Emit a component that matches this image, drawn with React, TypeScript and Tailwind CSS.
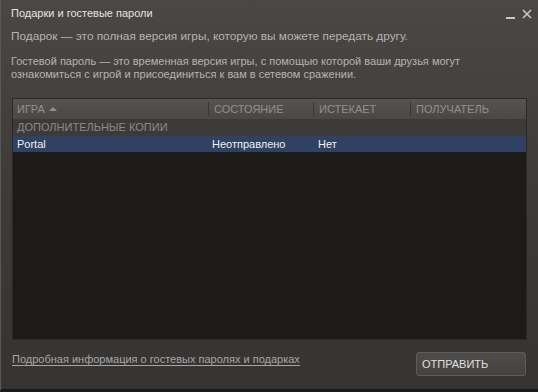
import React from "react";

export default function App() {
  const font = { fontFamily: '"Liberation Sans", Arial, sans-serif' };
  return (
    <div
      className="w-[538px] h-[392px] overflow-hidden relative bg-gradient-to-b from-[#4a4745] via-[#3d3b39] to-[#363432] border-l border-[#5a5755] border-b-[3px] border-b-[#1a1a1a] flex flex-col text-[11px] leading-[13px]"
      style={font}
    >
      <div className="flex items-center h-[26px] pl-[10px] pr-[6px] pt-[1px]">
        <div className="text-[#e4e4e4] flex-1 text-[11px]">Подарки и гостевые пароли</div>
        <div className="flex items-center gap-[7px] text-[#c8c8c8]">
          <div className="w-[9px] h-[2px] bg-[#c8c8c8] mt-[8px]" />
          <svg width="10" height="10" viewBox="0 0 10 10">
            <path d="M1 1L9 9M9 1L1 9" stroke="#c8c8c8" strokeWidth="1.6" />
          </svg>
        </div>
      </div>
      <div className="pl-[10px] text-[#b4b4b4] mt-[4px] text-[11.8px]">
        Подарок — это полная версия игры, которую вы можете передать другу.
      </div>
      <div className="pl-[10px] text-[#b4b4b4] mt-[12px] w-[520px]">
        Гостевой пароль — это временная версия игры, с помощью которой ваши друзья могут
        <br />
        ознакомиться с игрой и присоединиться к вам в сетевом сражении.
      </div>
      <div className="mx-[11px] mt-[17px] h-[242px] w-[515px] bg-[#1c1b1a] border border-[#2a2928] flex flex-col">
        <div className="h-[20px] bg-gradient-to-b from-[#565350] to-[#4a4846] flex items-center text-[#92908e]">
          <div className="w-[196px] pl-[4px] flex items-center gap-[4px] border-r border-[#3a3836] h-[14px]">
            ИГРА
            <svg width="8" height="6" viewBox="0 0 8 6">
              <path d="M0 5L4 1L8 5Z" fill="#92908e" />
            </svg>
          </div>
          <div className="w-[105px] pl-[5px] border-r border-[#3a3836] h-[14px] flex items-center">
            СОСТОЯНИЕ
          </div>
          <div className="w-[97px] pl-[5px] border-r border-[#3a3836] h-[14px] flex items-center">
            ИСТЕКАЕТ
          </div>
          <div className="flex-1 pl-[5px] h-[14px] flex items-center">ПОЛУЧАТЕЛЬ</div>
        </div>
        <div className="h-[17px] bg-[#3d3b39] text-[#8c8a88] flex items-center pl-[4px]">
          ДОПОЛНИТЕЛЬНЫЕ КОПИИ
        </div>
        <div className="h-[16px] bg-[#2f4262] text-[#f0f0f0] flex items-center">
          <div className="w-[196px] pl-[4px]">Portal</div>
          <div className="w-[106px] pl-[3px]">Неотправлено</div>
          <div className="w-[97px] pl-[3px]">Нет</div>
        </div>
      </div>
      <div className="flex items-start mt-[12px] pl-[11px] pr-[12px]">
        <div className="flex-1 text-[#a8a6a4] underline underline-offset-[2px] mt-[1px]">
          Подробная информация о гостевых паролях и подарках
        </div>
        <div className="w-[110px] h-[24px] rounded-[3px] border border-[#5e5c5a] bg-gradient-to-b from-[#4e4c4a] to-[#444240] text-[#e0e0e0] flex items-center pl-[5px]">
          ОТПРАВИТЬ
        </div>
      </div>
    </div>
  );
}
